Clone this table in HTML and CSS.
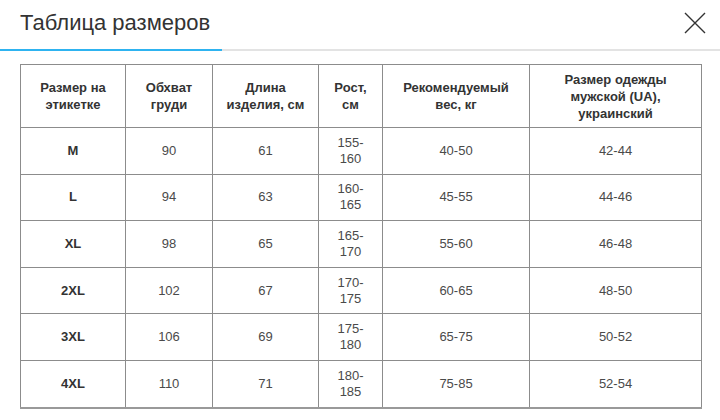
FILE: index.html
```html
<!DOCTYPE html>
<html lang="ru">
<head>
<meta charset="utf-8">
<title>Таблица размеров</title>
<link rel="stylesheet" href="styles.css">
</head>
<body>
<div class="modal">
  <div class="modal-head">
    <div class="tab"><span class="tab-title">Таблица размеров</span></div>
    <button class="close" aria-label="Закрыть">
      <svg width="22" height="22" viewBox="0 0 22 22"><path d="M1 1L21 21M21 1L1 21" stroke="#333" stroke-width="1.4" fill="none"/></svg>
    </button>
  </div>
  <table class="sizes">
    <colgroup>
      <col class="c1"><col class="c2"><col class="c3"><col class="c4"><col class="c5"><col class="c6">
    </colgroup>
    <thead>
      <tr>
        <th>Размер на<br>этикетке</th>
        <th>Обхват<br>груди</th>
        <th>Длина<br>изделия, см</th>
        <th>Рост,<br>см</th>
        <th>Рекомендуемый<br>вес, кг</th>
        <th>Размер одежды<br>мужской (UA),<br>украинский</th>
      </tr>
    </thead>
    <tbody>
      <tr><td class="sz">M</td><td>90</td><td>61</td><td>155-<br>160</td><td>40-50</td><td>42-44</td></tr>
      <tr><td class="sz">L</td><td>94</td><td>63</td><td>160-<br>165</td><td>45-55</td><td>44-46</td></tr>
      <tr><td class="sz">XL</td><td>98</td><td>65</td><td>165-<br>170</td><td>55-60</td><td>46-48</td></tr>
      <tr><td class="sz">2XL</td><td>102</td><td>67</td><td>170-<br>175</td><td>60-65</td><td>48-50</td></tr>
      <tr><td class="sz">3XL</td><td>106</td><td>69</td><td>175-<br>180</td><td>65-75</td><td>50-52</td></tr>
      <tr><td class="sz">4XL</td><td>110</td><td>71</td><td>180-<br>185</td><td>75-85</td><td>52-54</td></tr>
    </tbody>
  </table>
</div>
</body>
</html>
```

FILE: styles.css
```css
html, body {
  margin: 0;
  padding: 0;
  background: #fff;
}
body {
  font-family: "Liberation Sans", Arial, sans-serif;
  color: #333;
}
.modal {
  width: 720px;
  height: 420px;
  overflow: hidden;
}
.modal-head {
  display: flex;
  justify-content: space-between;
  align-items: stretch;
  height: 49px;
  border-bottom: 2px solid #e3e3e3;
}
.tab {
  width: 202px;
  padding-left: 20px;
  border-bottom: 2px solid #2eb3f0;
  margin-bottom: -2px;
  display: flex;
  align-items: flex-start;
}
.tab-title {
  font-size: 22px;
  line-height: 26px;
  margin-top: 10px;
  color: #333;
  white-space: nowrap;
}
.close {
  border: 0;
  background: none;
  padding: 0;
  margin: 12px 14px 0 0;
  width: 22px;
  height: 22px;
  display: flex;
  cursor: pointer;
}
.sizes {
  margin: 13px 0 0 20px;
  width: 681px;
  border-collapse: collapse;
  table-layout: fixed;
  font-size: 13px;
}
.c1 { width: 105px; }
.c2 { width: 87px; }
.c3 { width: 106px; }
.c4 { width: 64px; }
.c5 { width: 147px; }
.c6 { width: 172px; }
.sizes th, .sizes td {
  border: 1px solid #8c8c8c;
  text-align: center;
  vertical-align: middle;
  padding: 0;
}
.sizes th {
  height: 62px;
  font-weight: bold;
  line-height: 17px;
  color: #333;
}
.sizes td {
  height: 45.6px;
  line-height: 16px;
  color: #4a4a4a;
}
.sizes td.sz {
  font-weight: bold;
  color: #333;
}
.sizes tbody tr:last-child td {
  border-bottom: 2px solid #999;
}
```
